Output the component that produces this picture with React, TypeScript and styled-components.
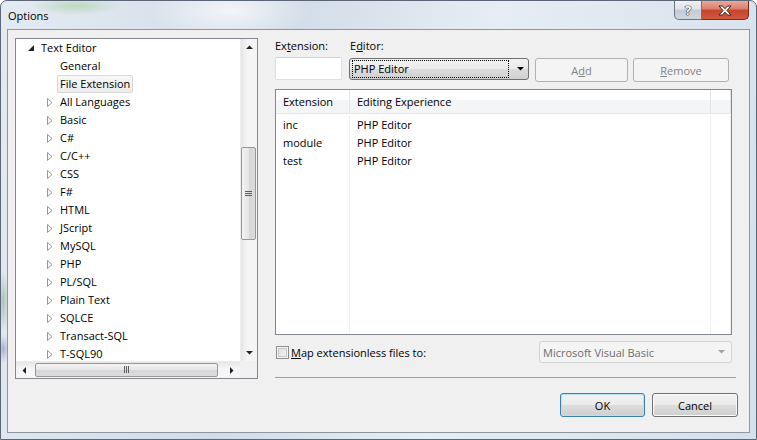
import React from "react";
import styled, { createGlobalStyle } from "styled-components";

const Global = createGlobalStyle`
  html, body { margin: 0; padding: 0; width: 757px; height: 440px; overflow: hidden; background: #fff; }
  body { font-family: "Open Sans", "Liberation Sans", sans-serif; font-size: 11px; color: #000; }
  * { box-sizing: border-box; }
`;

const Window = styled.div`
  width: 757px;
  height: 440px;
  display: flex;
  flex-direction: column;
  padding: 0 6px 6px 6px;
  border: 1px solid #5b6676;
  border-radius: 7px 7px 0 0;
  background:
    radial-gradient(ellipse 45px 9px at 75px 5px, rgba(160, 205, 150, 0.55), transparent),
    radial-gradient(ellipse 80px 30px at 230px 10px, rgba(255, 255, 255, 0.7), transparent),
    radial-gradient(ellipse 6px 30px at 2px 300px, rgba(120, 160, 120, 0.5), transparent),
    radial-gradient(ellipse 6px 14px at 2px 348px, rgba(110, 110, 170, 0.45), transparent),
    linear-gradient(100deg, #e3eaf2 0%, #d2dce8 35%, #e6edf4 60%, #d6e0eb 100%);
`;

const TitleBar = styled.div`
  height: 28px;
  display: flex;
  align-items: flex-start;
`;

const Title = styled.span`
  margin: 7px 0 0 1px;
  font-size: 11px;
  line-height: 15px;
  color: #000;
`;

const Caption = styled.div`
  margin-left: auto;
  margin-right: 1px;
  display: flex;
`;

const CapButton = styled.div<{ $close?: boolean }>`
  height: 19px;
  width: ${(p) => (p.$close ? "47px" : "28px")};
  display: flex;
  align-items: center;
  justify-content: center;
  border: 1px solid ${(p) => (p.$close ? "#7b2a1e" : "#6b7480")};
  border-top: none;
  border-left: ${(p) => (p.$close ? "none" : "1px solid #6b7480")};
  border-radius: ${(p) => (p.$close ? "0 0 5px 0" : "0 0 0 5px")};
  background: ${(p) =>
    p.$close
      ? "linear-gradient(#e8a99c 0%, #dc7d6b 45%, #c8442d 50%, #d0583e 100%)"
      : "linear-gradient(#eef1f5 0%, #dde3ea 45%, #c3cbd5 50%, #cfd6de 100%)"};
  color: #fff;
  font-weight: 700;
  font-size: 13px;
  text-shadow: 0 0 1px #223, 0 0 1px #223, 0 0 1px #223;
`;

const Client = styled.div`
  flex: 1;
  display: flex;
  flex-direction: column;
  border: 1px solid #8d96a1;
  background: #f0f0f0;
  padding: 8px 11px 15px 7px;
`;

const TopArea = styled.div`
  height: 341px;
  display: flex;
`;

/* ---------- Tree ---------- */

const TreeBox = styled.div`
  width: 243px;
  height: 341px;
  border: 1px solid #828790;
  background: #fff;
  display: grid;
  grid-template-columns: 1fr 17px;
  grid-template-rows: 1fr 17px;
`;

const TreeContent = styled.div`
  overflow: hidden;
`;

const TreeRow = styled.div<{ $level: number }>`
  height: 18px;
  display: flex;
  align-items: center;
  padding-left: ${(p) => (p.$level === 0 ? 10 : 29)}px;
  white-space: nowrap;
`;

const Expander = styled.span`
  width: 10px;
  height: 18px;
  display: flex;
  align-items: center;
  justify-content: center;
  margin-right: 2px;
`;

const TreeLabel = styled.span<{ $selected?: boolean }>`
  height: 18px;
  line-height: 16px;
  padding: 0 2px 0 2px;
  border: 1px solid ${(p) => (p.$selected ? "#d9d9d9" : "transparent")};
  border-radius: 2px;
  background: ${(p) => (p.$selected ? "linear-gradient(#f8f8f8, #ececec)" : "transparent")};
`;

const VScroll = styled.div`
  display: flex;
  flex-direction: column;
  background: linear-gradient(to right, #e6e6e6, #f5f5f5 40%, #f5f5f5);
  border-left: 1px solid #ededed;
`;

const HScroll = styled.div`
  display: flex;
  align-items: center;
  background: linear-gradient(#e6e6e6, #f5f5f5 40%, #f5f5f5);
  border-top: 1px solid #ededed;
`;

const Corner = styled.div`
  background: #f0f0f0;
`;

const ArrowBtn = styled.div`
  width: 16px;
  height: 16px;
  flex: none;
  display: flex;
  align-items: center;
  justify-content: center;
`;

const VThumb = styled.div<{ $offset: number; $size: number }>`
  margin: ${(p) => p.$offset}px 1px 0 0;
  height: ${(p) => p.$size}px;
  border: 1px solid #979797;
  border-radius: 2px;
  background: linear-gradient(to right, #f3f3f3, #e6e6e6 50%, #d6d6d6 51%, #dcdcdc);
  display: flex;
  align-items: center;
  justify-content: center;
`;

const HThumb = styled.div<{ $offset: number; $size: number }>`
  margin: 0 0 1px ${(p) => p.$offset}px;
  width: ${(p) => p.$size}px;
  height: 14px;
  border: 1px solid #979797;
  border-radius: 2px;
  background: linear-gradient(#f3f3f3, #e6e6e6 50%, #d6d6d6 51%, #dcdcdc);
  display: flex;
  align-items: center;
  justify-content: center;
`;

const HSpacer = styled.div`
  flex: 1;
`;

/* ---------- Right panel ---------- */

const RightPanel = styled.div`
  flex: 1;
  margin-left: 17px;
  display: flex;
  flex-direction: column;
`;

const LabelRow = styled.div`
  height: 16px;
  display: flex;
  line-height: 15px;
`;

const FieldLabel = styled.span<{ $width: number }>`
  width: ${(p) => p.$width}px;
`;

const InputRow = styled.div`
  margin-top: 3px;
  height: 25px;
  display: flex;
  align-items: flex-start;
`;

const TextBox = styled.div`
  width: 67px;
  height: 23px;
  background: #fff;
  border: 1px solid #dbdfe6;
  border-top-color: #cfd3da;
  border-radius: 2px;
`;

const ComboFocused = styled.div`
  margin: 1px 0 0 7px;
  width: 180px;
  height: 22px;
  border: 1px solid #707070;
  border-radius: 3px;
  background: linear-gradient(#f2f2f2 0%, #ebebeb 48%, #dddddd 50%, #cfcfcf 100%);
  display: flex;
  align-items: center;
  padding: 1px 4px 1px 2px;
`;

const FocusText = styled.div`
  flex: 1;
  height: 18px;
  line-height: 16px;
  border: 1px dotted #000;
  padding-left: 1px;
`;

const ComboArrow = styled.div`
  width: 15px;
  display: flex;
  justify-content: flex-end;
`;

const PushButton = styled.div<{ $width: number; $disabled?: boolean; $default?: boolean }>`
  width: ${(p) => p.$width}px;
  height: 24px;
  display: flex;
  align-items: center;
  justify-content: center;
  border-radius: 3px;
  border: 1px solid ${(p) => (p.$disabled ? "#adb2b5" : p.$default ? "#3c7fb1" : "#707070")};
  color: ${(p) => (p.$disabled ? "#838383" : "#000")};
  background: ${(p) =>
    p.$disabled
      ? "#f4f4f4"
      : "linear-gradient(#f2f2f2 0%, #ebebeb 48%, #dddddd 50%, #cfcfcf 100%)"};
  box-shadow: ${(p) =>
    p.$disabled ? "none" : p.$default ? "inset 0 0 0 1px #b8e1f5" : "inset 0 0 0 1px #fcfcfc"};
  line-height: 15px;
`;

const AddBtn = styled(PushButton)`
  margin: 1px 0 0 6px;
`;

const RemoveBtn = styled(PushButton)`
  margin: 1px 0 0 5px;
`;

const ListView = styled.div`
  margin-top: 7px;
  margin-right: 6px;
  height: 246px;
  border: 1px solid #828790;
  background: #fff;
  display: flex;
  flex-direction: column;
`;

const grid = `
  display: grid;
  grid-template-columns: 74px 361px 1fr;
`;

const Header = styled.div`
  ${grid};
  height: 24px;
  background: linear-gradient(#ffffff 0%, #ffffff 42%, #f4f5f7 43%, #f4f5f7 100%);
  border-bottom: 1px solid #e6e7e9;
`;

const HeaderCell = styled.div`
  padding-left: 7px;
  line-height: 23px;
  border-right: 1px solid #e3e4e6;
`;

const Body = styled.div`
  ${grid};
  flex: 1;
  padding-top: 2px;
  grid-template-rows: repeat(3, 18px) 1fr;
`;

const Cell = styled.div`
  padding-left: 7px;
  line-height: 18px;
  border-right: 1px solid #f0f0f0;
`;

const MapRow = styled.div`
  margin-top: 6px;
  margin-right: 6px;
  height: 22px;
  display: flex;
  align-items: center;
`;

const CheckBox = styled.div`
  margin-left: 1px;
  width: 13px;
  height: 13px;
  border: 1px solid #8f8f8f;
  background: linear-gradient(135deg, #dcdcdc, #f6f6f6);
  box-shadow: inset 0 0 0 1px #f4f4f4, inset 0 0 0 2px #c9c9c9;
`;

const CheckLabel = styled.span`
  margin-left: 2px;
  line-height: 15px;
`;

const ComboDisabled = styled.div`
  margin-left: auto;
  width: 193px;
  height: 22px;
  border: 1px solid #d5d5d5;
  border-radius: 3px;
  background: #f4f4f4;
  color: #6d6d6d;
  display: flex;
  align-items: center;
  padding: 0 6px 0 3px;
`;

const ComboText = styled.span`
  flex: 1;
  line-height: 15px;
`;

const Separator = styled.div`
  margin-top: 14px;
  margin-right: 2px;
  height: 1px;
  background: #a0a0a0;
`;

const ButtonRow = styled.div`
  margin-top: 14px;
  display: flex;
  justify-content: flex-end;
  gap: 7px;
`;

/* ---------- Icons ---------- */

const ExpandedGlyph = () => (
  <svg width="6" height="6" viewBox="0 0 6 6">
    <path d="M6 0 L6 6 L0 6 Z" fill="#262626" />
  </svg>
);

const CollapsedGlyph = () => (
  <svg width="6" height="9" viewBox="0 0 6 9">
    <path d="M0.5 0.5 L5 4.5 L0.5 8.5 Z" fill="#fff" stroke="#989898" strokeWidth="1" />
  </svg>
);

const Tri = ({ dir, color = "#222" }: { dir: "up" | "down" | "left" | "right"; color?: string }) => {
  const d =
    dir === "up"
      ? "M0 4 L3.5 0.5 L7 4 Z"
      : dir === "down"
      ? "M0 0 L7 0 L3.5 3.5 Z"
      : dir === "left"
      ? "M4 0 L4 7 L0.5 3.5 Z"
      : "M0 0 L0 7 L3.5 3.5 Z";
  const horiz = dir === "left" || dir === "right";
  return (
    <svg width={horiz ? 4 : 7} height={horiz ? 7 : 4} viewBox={horiz ? "0 0 4 7" : "0 0 7 4"}>
      <path d={d} fill={color} />
    </svg>
  );
};

const VGrip = () => (
  <svg width="7" height="7" viewBox="0 0 7 7">
    <path d="M0 1.5 H7 M0 3.5 H7 M0 5.5 H7" stroke="#5c5c5c" strokeWidth="1" />
  </svg>
);

const HGrip = () => (
  <svg width="7" height="7" viewBox="0 0 7 7">
    <path d="M1.5 0 V7 M3.5 0 V7 M5.5 0 V7" stroke="#5c5c5c" strokeWidth="1" />
  </svg>
);

const CloseX = () => (
  <svg width="14" height="11" viewBox="0 0 14 11">
    <path
      d="M1 1 H4.5 L7 3.8 L9.5 1 H13 L9 5.5 L13 10 H9.5 L7 7.2 L4.5 10 H1 L5 5.5 Z"
      fill="#fff"
      stroke="#4a1a12"
      strokeWidth="1"
      strokeLinejoin="round"
    />
  </svg>
);

/* ---------- Data ---------- */

const languages = [
  "All Languages",
  "Basic",
  "C#",
  "C/C++",
  "CSS",
  "F#",
  "HTML",
  "JScript",
  "MySQL",
  "PHP",
  "PL/SQL",
  "Plain Text",
  "SQLCE",
  "Transact-SQL",
  "T-SQL90",
];

const mappings = [
  ["inc", "PHP Editor"],
  ["module", "PHP Editor"],
  ["test", "PHP Editor"],
];

export default function App() {
  return (
    <>
      <Global />
      <Window>
        <TitleBar>
          <Title>Options</Title>
          <Caption>
            <CapButton>?</CapButton>
            <CapButton $close>
              <CloseX />
            </CapButton>
          </Caption>
        </TitleBar>
        <Client>
          <TopArea>
            <TreeBox>
              <TreeContent>
                <TreeRow $level={0}>
                  <Expander>
                    <ExpandedGlyph />
                  </Expander>
                  <TreeLabel>Text Editor</TreeLabel>
                </TreeRow>
                <TreeRow $level={1}>
                  <Expander />
                  <TreeLabel>General</TreeLabel>
                </TreeRow>
                <TreeRow $level={1}>
                  <Expander />
                  <TreeLabel $selected>File Extension</TreeLabel>
                </TreeRow>
                {languages.map((l) => (
                  <TreeRow $level={1} key={l}>
                    <Expander>
                      <CollapsedGlyph />
                    </Expander>
                    <TreeLabel>{l}</TreeLabel>
                  </TreeRow>
                ))}
              </TreeContent>
              <VScroll>
                <ArrowBtn>
                  <Tri dir="up" />
                </ArrowBtn>
                <VThumb $offset={92} $size={93}>
                  <VGrip />
                </VThumb>
                <HSpacer />
                <ArrowBtn>
                  <Tri dir="down" />
                </ArrowBtn>
              </VScroll>
              <HScroll>
                <ArrowBtn>
                  <Tri dir="left" />
                </ArrowBtn>
                <HThumb $offset={3} $size={183}>
                  <HGrip />
                </HThumb>
                <HSpacer />
                <ArrowBtn>
                  <Tri dir="right" />
                </ArrowBtn>
              </HScroll>
              <Corner />
            </TreeBox>

            <RightPanel>
              <LabelRow>
                <FieldLabel $width={75}>
                  Ex<u>t</u>ension:
                </FieldLabel>
                <FieldLabel $width={80}>
                  E<u>d</u>itor:
                </FieldLabel>
              </LabelRow>
              <InputRow>
                <TextBox />
                <ComboFocused>
                  <FocusText>PHP Editor</FocusText>
                  <ComboArrow>
                    <Tri dir="down" color="#000" />
                  </ComboArrow>
                </ComboFocused>
                <AddBtn $width={93} $disabled>
                  <span>
                    A<u>d</u>d
                  </span>
                </AddBtn>
                <RemoveBtn $width={96} $disabled>
                  <span>
                    <u>R</u>emove
                  </span>
                </RemoveBtn>
              </InputRow>
              <ListView>
                <Header>
                  <HeaderCell>Extension</HeaderCell>
                  <HeaderCell>Editing Experience</HeaderCell>
                  <HeaderCell />
                </Header>
                <Body>
                  {mappings.map(([ext, ed]) => (
                    <React.Fragment key={ext}>
                      <Cell>{ext}</Cell>
                      <Cell>{ed}</Cell>
                      <Cell />
                    </React.Fragment>
                  ))}
                  <Cell />
                  <Cell />
                  <Cell />
                </Body>
              </ListView>
              <MapRow>
                <CheckBox />
                <CheckLabel>
                  <u>M</u>ap extensionless files to:
                </CheckLabel>
                <ComboDisabled>
                  <ComboText>Microsoft Visual Basic</ComboText>
                  <Tri dir="down" color="#a2a2a2" />
                </ComboDisabled>
              </MapRow>
              <Separator />
            </RightPanel>
          </TopArea>
          <ButtonRow>
            <PushButton $width={85} $default>
              OK
            </PushButton>
            <PushButton $width={86}>Cancel</PushButton>
          </ButtonRow>
        </Client>
      </Window>
    </>
  );
}
